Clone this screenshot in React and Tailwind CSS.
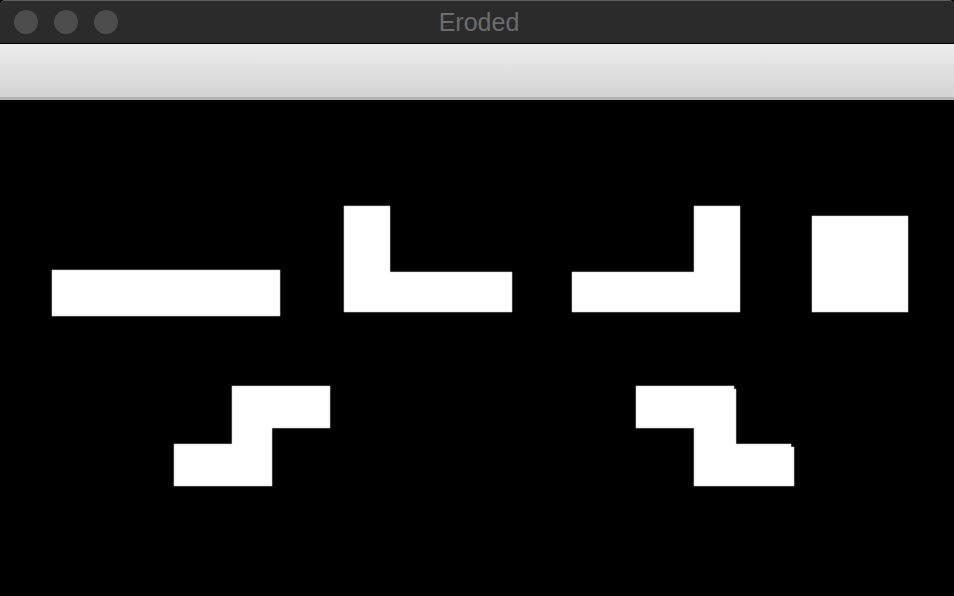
export default function App() {
  return (
    <div className="w-[954px] h-[596px] flex flex-col bg-black overflow-hidden" style={{ fontFamily: '"Liberation Sans", Arial, sans-serif' }}>
      <div className="h-[43px] bg-[#2b2b2b] border-t border-[#5c5c5c] rounded-t-[5px] flex items-center relative shrink-0">
        <div className="flex gap-4 pl-[14px]">
          <div className="w-6 h-6 rounded-full bg-[#4d4d4d]" />
          <div className="w-6 h-6 rounded-full bg-[#4d4d4d]" />
          <div className="w-6 h-6 rounded-full bg-[#4d4d4d]" />
        </div>
        <div className="absolute inset-0 flex items-center justify-center pl-[4px] pt-[1px] text-[25px] text-[#6c6c6c]">Eroded</div>
      </div>
      <div className="h-px bg-black shrink-0" />
      <div className="h-[53px] bg-gradient-to-b from-[#ededed] to-[#d3d3d3] shrink-0" />
      <div className="h-[3px] bg-[#b3b3b3] shrink-0" />
      <svg width="954" height="496" viewBox="0 100 954 496" className="block shrink-0">
        <g fill="#ffffff" stroke="#d0d0d0" strokeWidth="0.6">
          <rect x="52" y="270" width="228" height="46" />
          <polygon points="344,206 390,206 390,272 512,272 512,312 344,312" />
          <polygon points="694,206 740,206 740,312 572,312 572,272 694,272" />
          <rect x="812" y="216" width="96" height="96" />
          <polygon points="232,386 330,386 330,428 272,428 272,486 174,486 174,444 232,444" />
          <polygon points="636,386 734,386 734,389 736,389 736,444 791,444 791,447 794,447 794,486 694,486 694,428 636,428" />
        </g>
      </svg>
    </div>
  );
}
